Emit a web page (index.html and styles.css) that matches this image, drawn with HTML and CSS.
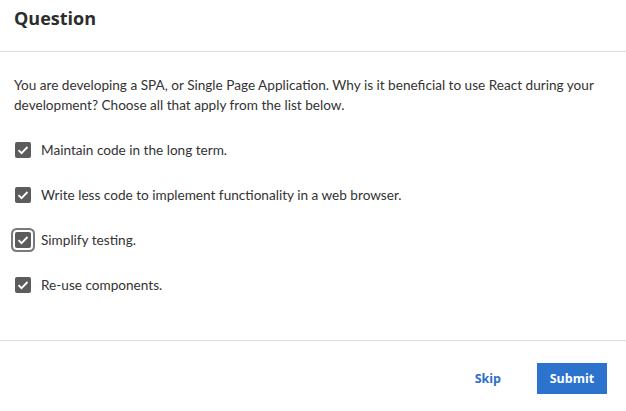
FILE: index.html
```html
<!DOCTYPE html>
<html>
<head>
<meta charset="utf-8">
<link rel="stylesheet" href="styles.css">
</head>
<body>
<div class="dialog">
  <header class="head"><h1 class="title">Question</h1></header>
  <main class="body">
    <p class="prompt">You are developing a SPA, or Single Page Application. Why is it beneficial to use React during your development? Choose all that apply from the list below.</p>
    <ul class="options">
      <li class="option"><span class="box"><svg viewBox="0 0 16 16" width="16" height="16"><path d="M3.5 8.2l3 3 6-6.2" fill="none" stroke="#fff" stroke-width="1.8"/></svg></span><span class="label">Maintain code in the long term.</span></li>
      <li class="option"><span class="box"><svg viewBox="0 0 16 16" width="16" height="16"><path d="M3.5 8.2l3 3 6-6.2" fill="none" stroke="#fff" stroke-width="1.8"/></svg></span><span class="label">Write less code to implement functionality in a web browser.</span></li>
      <li class="option"><span class="box focus"><svg viewBox="0 0 16 16" width="16" height="16"><path d="M3.5 8.2l3 3 6-6.2" fill="none" stroke="#fff" stroke-width="1.8"/></svg></span><span class="label">Simplify testing.</span></li>
      <li class="option"><span class="box"><svg viewBox="0 0 16 16" width="16" height="16"><path d="M3.5 8.2l3 3 6-6.2" fill="none" stroke="#fff" stroke-width="1.8"/></svg></span><span class="label">Re-use components.</span></li>
    </ul>
  </main>
  <footer class="foot">
    <button class="skip">Skip</button>
    <button class="submit">Submit</button>
  </footer>
</div>
</body>
</html>
```
FILE: styles.css
```css
* { box-sizing: border-box; }
html, body { margin: 0; padding: 0; background: #fff; }
body { font-family: Lato, "Liberation Sans", sans-serif; color: #333; }
.dialog { width: 626px; height: 411px; display: flex; flex-direction: column; }
.head { height: 52px; border-bottom: 1px solid #dcdcdc; padding: 0 14px; display: flex; align-items: center; }
.title { margin: 0; font-family: "Open Sans", sans-serif; font-weight: 700; font-size: 18px; color: #2d2d2d; padding-bottom: 16px; }
.body { padding: 23px 14px 0; height: 289px; border-bottom: 1px solid #dcdcdc; }
.prompt { margin: 0; font-size: 13.6px; line-height: 20px; }
.options { list-style: none; margin: 12px 0 0; padding: 0; }
.option { display: flex; align-items: center; height: 45px; font-size: 13.6px; }
.box { width: 16px; height: 16px; background: #5c5c5c; border-radius: 2px; margin-left: 1px; margin-right: 10px; display: flex; }
.box.focus { box-shadow: 0 0 0 2px #fff, 0 0 0 4px #7a7a7a; }
.foot { display: flex; justify-content: flex-end; align-items: center; gap: 10px; padding: 4px 19px 0 0; flex: 1; }
button { font-family: "Open Sans", sans-serif; font-weight: 700; font-size: 12.5px; border: 0; cursor: pointer; }
.skip { background: none; color: #2a6fc9; padding: 0 26px 0 30px; height: 31px; }
.submit { background: #2b73cd; color: #fff; width: 70px; height: 31px; }
```
